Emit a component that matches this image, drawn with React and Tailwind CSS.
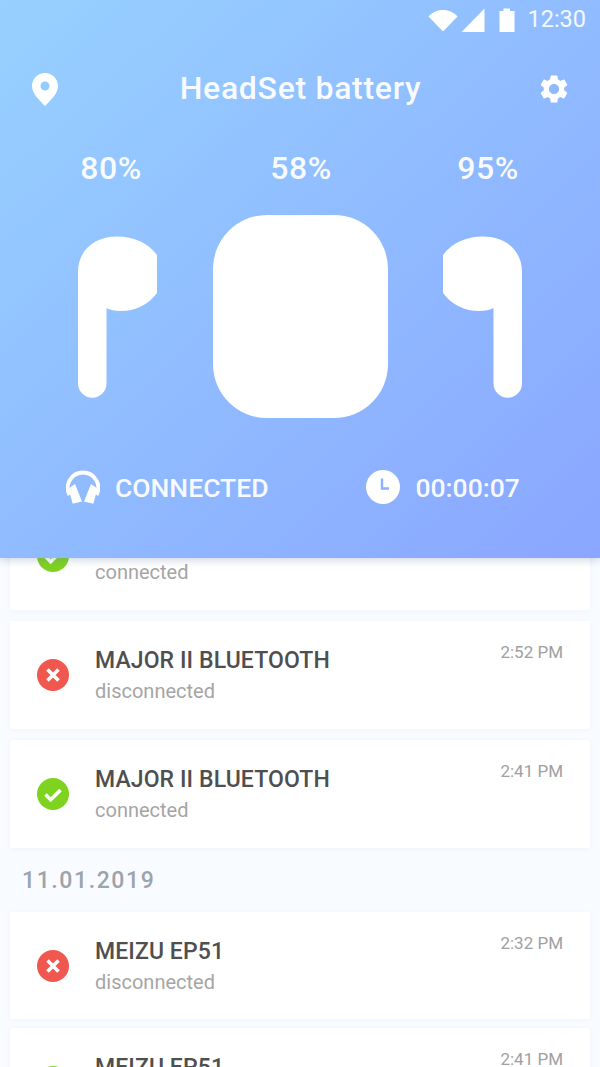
import React from "react";
import { MdSettings } from "react-icons/md";

const recent = [
  { id: 1, title: "MAJOR II BLUETOOTH", status: "connected", time: "3:02 PM" },
  { id: 2, title: "MAJOR II BLUETOOTH", status: "disconnected", time: "2:52 PM" },
  { id: 3, title: "MAJOR II BLUETOOTH", status: "connected", time: "2:41 PM" },
];

const older = [
  { id: 4, title: "MEIZU EP51", status: "disconnected", time: "2:32 PM" },
  { id: 5, title: "MEIZU EP51", status: "connected", time: "2:41 PM" },
];

const StatusIcon = ({ status }) => {
  if (status === "connected") {
    return (
      <svg width="32" height="32" viewBox="0 0 32 32" className="shrink-0">
        <circle cx="16" cy="16" r="16" fill="#7ed321" />
        <path d="M8.5 16.5l5.2 5.2L23.5 12" fill="none" stroke="#fff" strokeWidth="3.6" />
      </svg>
    );
  }
  return (
    <svg width="32" height="32" viewBox="0 0 32 32" className="shrink-0">
      <circle cx="16" cy="16" r="16" fill="#f0584f" />
      <path d="M10.5 10.5l11 11M21.5 10.5l-11 11" fill="none" stroke="#fff" strokeWidth="3.6" />
    </svg>
  );
};

const Card = ({ item, small }) => (
  <div
    className={`flex items-center rounded-[3px] bg-white px-[27px] shadow-[0_1px_5px_rgba(120,150,190,0.06)] ${
      small ? "h-[107px]" : "h-[108px]"
    }`}
  >
    <StatusIcon status={item.status} />
    <div className="ml-[26px] flex-1 pt-[1px]">
      <div className="text-[23px] leading-[30px] font-medium tracking-[0.1px] text-[#4f4f4f]">{item.title}</div>
      <div className="mt-[2px] text-[20px] leading-[27px] text-[#a5a5a5]">{item.status}</div>
    </div>
    <div className="mb-[46px] text-[17px] leading-[20px] text-[#a0a0a0]">{item.time}</div>
  </div>
);

const Bud = ({ flip }) => (
  <svg width="79" height="162" viewBox="78 236 79 162" className={flip ? "-ml-[1px] -scale-x-100" : ""}>
    <path
      d="M78 272C78 250 95 236.500 117 236.500C134 236.500 148 243 157 255V293C148 305 135 311 121 311C115 311 110 310 106.500 308V383.500a14.250 14.250 0 0 1-28.500 0Z"
      fill="#fff"
    />
  </svg>
);

const Headset = () => (
  <svg width="34" height="34" viewBox="0 0 34 34" className="shrink-0">
    <path d="M3.500 25A15.300 15.300 0 1 1 30.500 25" fill="none" stroke="#fff" strokeWidth="3.800" />
    <path d="M2.500 18.500L9 14L16 31.500L6.700 33.700Z" fill="#fff" />
    <path d="M31.500 18.500L25 14L18 31.500L27.300 33.700Z" fill="#fff" />
  </svg>
);

const Pin = () => (
  <svg width="26" height="33" viewBox="0 0 26 33">
    <path
      fillRule="evenodd"
      d="M13 0C5.800 0 0 5.800 0 13C0 21 8 27.500 13 33C18 27.500 26 21 26 13C26 5.800 20.200 0 13 0ZM13 8.500a4.500 4.500 0 1 1 0 9a4.500 4.500 0 1 1 0-9Z"
      fill="#fff"
    />
  </svg>
);

const StatusBar = () => (
  <div className="flex h-[40px] items-center justify-end pr-[14px]">
    <svg width="30" height="24" viewBox="0 0 30 24">
      <path d="M0.500 8.500C4 4.500 9 2 15 2s11 2.500 14.500 6.500L15 23.500Z" fill="#fff" />
    </svg>
    <svg width="24" height="24" viewBox="0 0 24 24" className="ml-[3px]">
      <path d="M23.500 0.500V24H0.500Z" fill="#fff" />
    </svg>
    <svg width="16" height="24" viewBox="0 0 16 24" className="ml-[14px]">
      <path d="M0.500 3H4.500V0.500H11V3H15.500V24H0.500Z" fill="#fff" />
    </svg>
    <span className="ml-[12px] text-[23.500px] leading-none text-white/90">12:30</span>
  </div>
);

const Header = () => (
  <div className="relative z-10 h-[558px] shrink-0 bg-gradient-to-br from-[#97d1ff] to-[#8aa6ff] text-white shadow-[0_2px_8px_rgba(90,110,160,0.3)]">
    <StatusBar />
    <div className="mt-[24px] flex h-[50px] items-center justify-between pl-[26px] pr-[29px]">
      <div className="flex w-[38px] justify-center">
        <Pin />
      </div>
      <div className="pb-[2px] text-[32px] font-medium tracking-[0.7px] text-white/95">HeadSet battery</div>
      <MdSettings size={34} color="#fff" />
    </div>
    <div className="mt-[34px] grid grid-cols-[222px_158px_216px] text-center text-[32px] leading-[40px] font-medium tracking-[0.6px] text-white/95">
      <div>80%</div>
      <div>58%</div>
      <div>95%</div>
    </div>
    <div className="mt-[27px] flex items-center justify-center gap-[56px]">
      <Bud />
      <div className="h-[203px] w-[175px] rounded-[54px] bg-white" />
      <Bud flip />
    </div>
    <div className="mt-[52px] flex items-center pl-[66px] text-white/95">
      <Headset />
      <span className="ml-[15px] pt-[2px] text-[26.500px] leading-none font-medium">CONNECTED</span>
      <svg width="34" height="34" viewBox="0 0 34 34" className="ml-[98px]">
        <circle cx="17" cy="17" r="17" fill="#fff" />
        <path d="M16 8.500V18.500H23" fill="none" stroke="#8fb0ff" strokeWidth="2.400" />
      </svg>
      <span className="ml-[15px] pt-[2px] text-[26.500px] leading-none font-medium">00:00:07</span>
    </div>
  </div>
);

export default function App() {
  return (
    <div className="flex h-[1067px] flex-col overflow-hidden bg-[#f8fbff] font-['Roboto',sans-serif]">
      <Header />
      <div className="mt-[-56px] px-[10px]">
        <div className="flex flex-col gap-[11px]">
          {recent.map((item) => (
            <Card key={item.id} item={item} />
          ))}
        </div>
        <div className="flex h-[64px] items-center pl-[12px] pt-[3px] text-[23px] font-medium tracking-[1.600px] text-[#9da3a9]">
          11.01.2019
        </div>
        <div className="flex flex-col gap-[9px]">
          {older.map((item) => (
            <Card key={item.id} item={item} small />
          ))}
        </div>
      </div>
    </div>
  );
}
